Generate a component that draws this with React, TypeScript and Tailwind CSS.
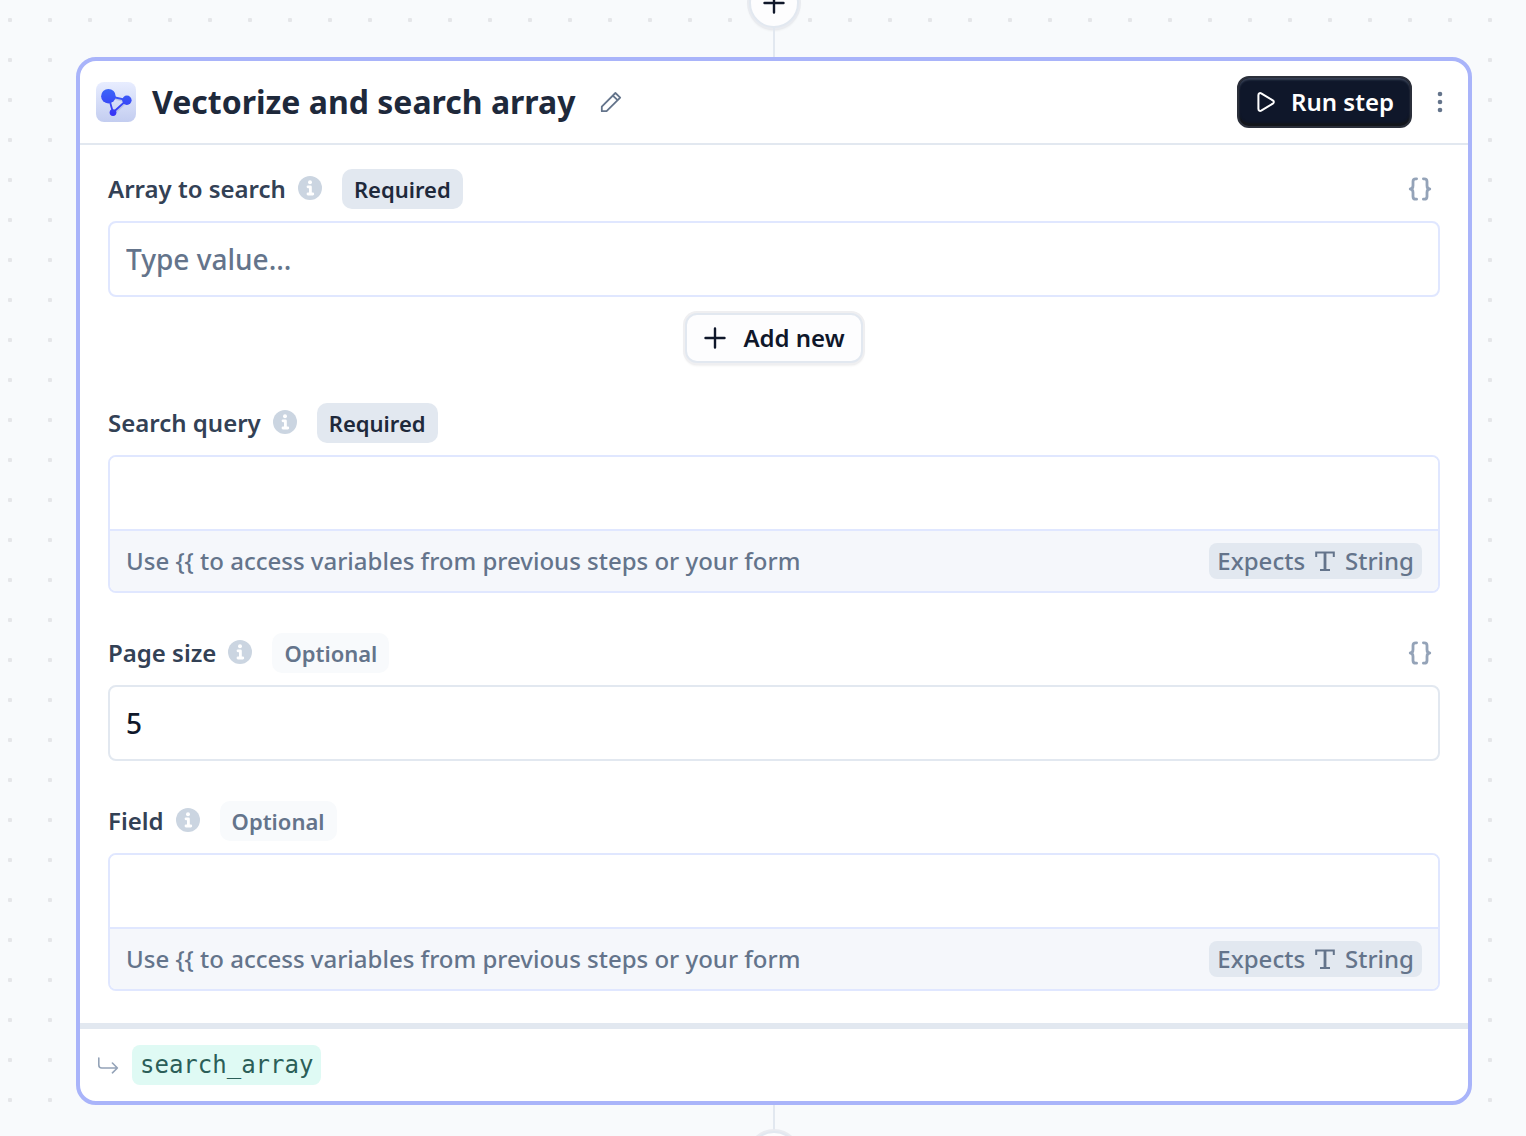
import type { ReactNode } from 'react';

function VectorLogo() {
  return (
    <svg viewBox="0 0 40 40" className="size-10 shrink-0" aria-hidden="true">
      <defs>
        <linearGradient id="logo-bg" x1="0" y1="0" x2="0" y2="1">
          <stop offset="0" stopColor="#e8edff" />
          <stop offset="1" stopColor="#c3cdf0" />
        </linearGradient>
        <linearGradient id="logo-fg" gradientUnits="userSpaceOnUse" x1="0" y1="7" x2="0" y2="34">
          <stop offset="0" stopColor="#3b66f8" />
          <stop offset="1" stopColor="#3730f5" />
        </linearGradient>
      </defs>
      <rect width="40" height="40" rx="8" fill="url(#logo-bg)" />
      <path d="M13 15.5 L31 20 L17.5 32.5 Z" fill="none" stroke="#aab4d8" strokeWidth="1.5" opacity="0.6" />
      <path d="M12.3 14 L30.8 18 L17 30.5 Z" fill="none" stroke="url(#logo-fg)" strokeWidth="1.8" />
      <circle cx="12.4" cy="14.2" r="7.3" fill="url(#logo-fg)" />
      <circle cx="30.9" cy="18.2" r="4.7" fill="url(#logo-fg)" />
      <circle cx="17" cy="30.6" r="3.4" fill="url(#logo-fg)" />
    </svg>
  );
}

function PencilIcon() {
  return (
    <svg viewBox="0 0 24 24" className="size-6" fill="none" stroke="currentColor" strokeWidth="1.8" strokeLinejoin="round" aria-hidden="true">
      <path d="M2.8 21.2V16.6L16.4 3L21.2 7.6L7.6 21.2Z" />
      <path d="M13.8 5.6L18.6 10.2" />
    </svg>
  );
}

function PlayIcon() {
  return (
    <svg viewBox="0 0 24 24" className="size-6 shrink-0" fill="none" stroke="currentColor" strokeWidth="2" strokeLinejoin="round" aria-hidden="true">
      <path d="M3.4 5.2C3.4 3.4 4.8 2.6 6.2 3.4L17.8 10.4C19.2 11.3 19.2 12.7 17.8 13.6L6.2 20.6C4.8 21.4 3.4 20.6 3.4 18.8Z" />
    </svg>
  );
}

function PlusIcon() {
  return (
    <svg viewBox="0 0 24 24" className="size-6 shrink-0" fill="none" stroke="currentColor" strokeWidth="2.4" strokeLinecap="round" aria-hidden="true">
      <path d="M12 2.5V21.5M2.5 12H21.5" />
    </svg>
  );
}

function DotsIcon() {
  return (
    <svg viewBox="0 0 24 24" className="size-6" fill="currentColor" aria-hidden="true">
      <circle cx="12" cy="4" r="2.3" />
      <circle cx="12" cy="12" r="2.3" />
      <circle cx="12" cy="20" r="2.3" />
    </svg>
  );
}

function InfoIcon() {
  return (
    <svg viewBox="0 0 24 24" className="mb-0.5 ml-3 size-6 shrink-0" aria-hidden="true">
      <circle cx="12" cy="12" r="12" fill="#cbd5e1" />
      <circle cx="12" cy="6.3" r="2" fill="#fff" />
      <path d="M10 10.8H12.4V18M10 18H14.8" fill="none" stroke="#fff" strokeWidth="2.8" strokeLinecap="round" strokeLinejoin="round" />
    </svg>
  );
}

function BracesIcon() {
  return (
    <svg viewBox="0 0 24 24" className="size-6" fill="none" stroke="currentColor" strokeWidth="2.8" strokeLinecap="round" strokeLinejoin="round" aria-hidden="true">
      <path d="M8.6 1.8H7.8C5.9 1.8 5 2.9 5 4.6V8.4C5 10.4 4 11.9 2.2 12C4 12.1 5 13.6 5 15.6V19.4C5 21.1 5.9 22.2 7.8 22.2H8.6" />
      <path d="M15.4 1.8H16.2C18.1 1.8 19 2.9 19 4.6V8.4C19 10.4 20 11.9 21.8 12C20 12.1 19 13.6 19 15.6V19.4C19 21.1 18.1 22.2 16.2 22.2H15.4" />
    </svg>
  );
}

function StringIcon() {
  return (
    <svg viewBox="0 0 24 24" className="size-6 shrink-0" fill="none" stroke="currentColor" aria-hidden="true">
      <path d="M3.2 8V3.6H20.8V8" strokeWidth="2" />
      <path d="M12 3.6V21" strokeWidth="2.8" />
      <path d="M7 21H17" strokeWidth="2" />
    </svg>
  );
}

function ReturnIcon() {
  return (
    <svg viewBox="0 0 24 24" className="size-6 shrink-0 text-[#94a3b8]" fill="none" stroke="currentColor" strokeWidth="1.6" strokeLinecap="round" strokeLinejoin="round" aria-hidden="true">
      <path d="M2.8 5V12C2.8 14 3.8 15 5.8 15H21.4M16.4 10L21.4 15L16.4 19.8" />
    </svg>
  );
}

function Badge({ required }: { required?: boolean }) {
  return required ? (
    <span className="ml-5 flex h-10 items-center rounded-[10px] bg-[#e2e8f0] px-3 text-[22px] font-semibold text-[#1e293b]">Required</span>
  ) : (
    <span className="ml-5 flex h-10 items-center rounded-[10px] bg-[#f8fafc] px-3 text-[22px] font-semibold text-[#64748b]">Optional</span>
  );
}

type FieldProps = {
  id: string;
  label: string;
  required?: boolean;
  braces?: boolean;
  children: ReactNode;
};

function Field({ id, label, required, braces, children }: FieldProps) {
  return (
    <div>
      <div className="mb-3 flex h-10 items-center">
        <label htmlFor={id} className="text-2xl font-semibold text-[#334155]">
          {label}
        </label>
        <InfoIcon />
        <Badge required={required} />
        {braces && (
          <button type="button" aria-label="Edit as JSON" className="ml-auto flex size-10 items-center justify-center text-[#94a3b8]">
            <BracesIcon />
          </button>
        )}
      </div>
      {children}
    </div>
  );
}

function VariableInput({ id }: { id: string }) {
  return (
    <div className="overflow-hidden rounded-lg border-2 border-indigo-100">
      <input id={id} type="text" className="block h-[72px] w-full bg-white px-4 text-[28px] font-medium text-[#0f172a] outline-none" />
      <div className="flex h-[62px] items-center justify-between border-t-2 border-indigo-100 bg-[#f5f7fb] px-4 text-2xl font-medium text-[#64748b]">
        <span>{'Use {{ to access variables from previous steps or your form'}</span>
        <span className="flex h-9 items-center gap-2 rounded-lg bg-[#e2e8f0] px-2">
          Expects
          <StringIcon />
          String
        </span>
      </div>
    </div>
  );
}

function AddStepButton() {
  return (
    <button
      type="button"
      aria-label="Add step"
      className="flex size-[50px] shrink-0 items-center justify-center rounded-full border-2 border-[#e2e8f0] bg-[#fdfdfe] text-[#0f172a] shadow-[0_0_0_2px_#e9ebf0,0_2px_3px_rgba(0,0,0,0.12)]"
    >
      <PlusIcon />
    </button>
  );
}

export default function App() {
  return (
    <main className="min-h-screen overflow-hidden bg-[#f8fafc] bg-[radial-gradient(circle_at_10px_20px,#e5e6e9_2px,transparent_2.5px)] bg-[length:40px_40px] pr-[54px] pl-[76px] font-['Noto_Sans',sans-serif]">
      {/* Connector from the previous step */}
      <div className="-mt-[22px] flex flex-col items-center">
        <AddStepButton />
        <div className="h-[29px] w-0.5 bg-[#e2e8f0]" />
      </div>

      {/* Step card */}
      <section className="rounded-[20px] border-4 border-[#a9b4fa] bg-white">
        <header className="flex h-[84px] items-center border-b-2 border-[#e2e8f0] px-4">
          <VectorLogo />
          <h2 className="ml-4 text-[32px] font-bold text-[#1e293b]">Vectorize and search array</h2>
          <button type="button" aria-label="Rename step" className="ml-6 text-[#64748b]">
            <PencilIcon />
          </button>
          <button
            type="button"
            className="ml-auto flex h-[52px] items-center gap-3 rounded-xl border-2 border-[#2b2f3a] bg-[#0f172a] px-4 text-2xl font-semibold text-white shadow-[inset_0_2px_2px_rgba(148,163,184,0.3),inset_0_-3px_2px_#14161b]"
          >
            <PlayIcon />
            Run step
          </button>
          <button type="button" aria-label="More options" className="ml-4 text-[#64748b]">
            <DotsIcon />
          </button>
        </header>

        <div className="flex flex-col gap-10 px-7 pt-6 pb-8">
          <Field id="array" label="Array to search" required braces>
            <input
              id="array"
              type="text"
              placeholder="Type value..."
              className="block h-[76px] w-full rounded-lg border-2 border-indigo-100 px-4 text-[28px] font-medium text-[#0f172a] outline-none placeholder:text-[#64748b]"
            />
            <button
              type="button"
              className="mx-auto mt-4 flex h-[50px] items-center gap-4 rounded-xl border-2 border-[#e2e8f0] bg-[#fdfdfe] px-4 text-2xl font-semibold text-[#0f172a] shadow-[0_0_0_2px_#efeff1,0_2px_3px_rgba(0,0,0,0.12)]"
            >
              <PlusIcon />
              Add new
            </button>
          </Field>

          <Field id="query" label="Search query" required>
            <VariableInput id="query" />
          </Field>

          <Field id="page-size" label="Page size" braces>
            <input
              id="page-size"
              type="text"
              defaultValue="5"
              className="block h-[76px] w-full rounded-lg border-2 border-[#e2e8f0] px-4 text-[28px] font-medium text-[#0f172a] outline-none"
            />
          </Field>

          <Field id="field" label="Field">
            <VariableInput id="field" />
          </Field>
        </div>

        <footer className="flex h-[78px] items-center border-t-[6px] border-[#e2e8f0] px-4">
          <ReturnIcon />
          <code className="ml-3 flex h-10 items-center rounded-lg bg-[#dffaf4] px-2 font-['DejaVu_Sans_Mono',monospace] text-2xl text-[#2b5e58]">
            search_array
          </code>
        </footer>
      </section>

      {/* Connector to the next step */}
      <div className="flex h-[31px] flex-col items-center overflow-hidden">
        <div className="h-[26px] w-0.5 shrink-0 bg-[#e2e8f0]" />
        <AddStepButton />
      </div>
    </main>
  );
}
